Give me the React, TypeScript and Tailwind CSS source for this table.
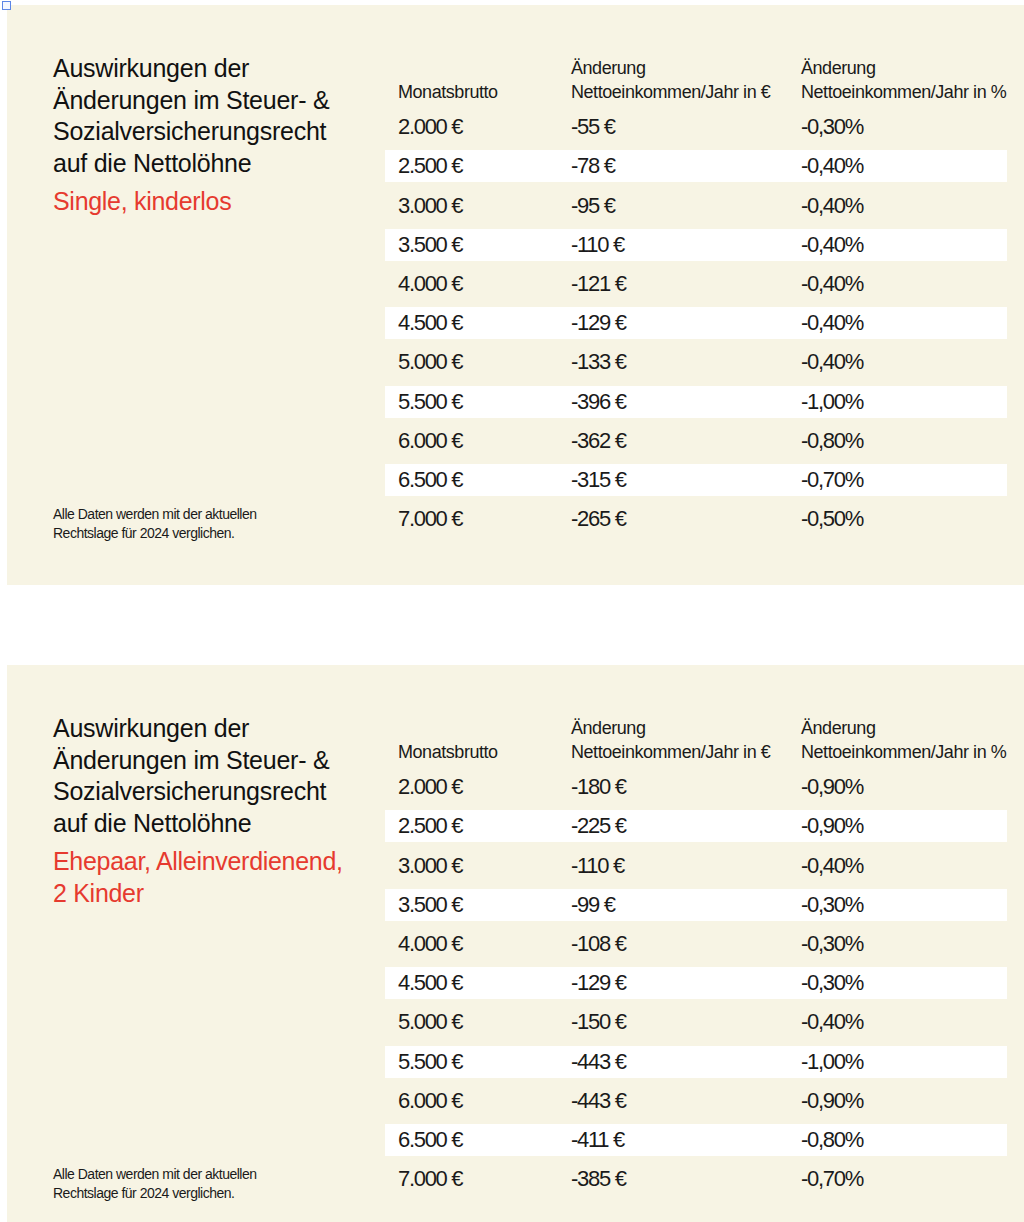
import React from "react";

type Row = [string, string, string];

const single: Row[] = [
  ["2.000 €", "-55 €", "-0,30%"],
  ["2.500 €", "-78 €", "-0,40%"],
  ["3.000 €", "-95 €", "-0,40%"],
  ["3.500 €", "-110 €", "-0,40%"],
  ["4.000 €", "-121 €", "-0,40%"],
  ["4.500 €", "-129 €", "-0,40%"],
  ["5.000 €", "-133 €", "-0,40%"],
  ["5.500 €", "-396 €", "-1,00%"],
  ["6.000 €", "-362 €", "-0,80%"],
  ["6.500 €", "-315 €", "-0,70%"],
  ["7.000 €", "-265 €", "-0,50%"],
];

const family: Row[] = [
  ["2.000 €", "-180 €", "-0,90%"],
  ["2.500 €", "-225 €", "-0,90%"],
  ["3.000 €", "-110 €", "-0,40%"],
  ["3.500 €", "-99 €", "-0,30%"],
  ["4.000 €", "-108 €", "-0,30%"],
  ["4.500 €", "-129 €", "-0,30%"],
  ["5.000 €", "-150 €", "-0,40%"],
  ["5.500 €", "-443 €", "-1,00%"],
  ["6.000 €", "-443 €", "-0,90%"],
  ["6.500 €", "-411 €", "-0,80%"],
  ["7.000 €", "-385 €", "-0,70%"],
];

const sans = "font-['Liberation_Sans',Arial,sans-serif]";

function Panel({ subtitle, rows }: { subtitle: React.ReactNode; rows: Row[] }) {
  return (
    <section className={`${sans} flex bg-[#f7f4e4] pl-[46px] pr-[17px] pt-[48px] pb-[42px] text-[#1a1a1a]`}>
      {/* left: headline + footnote */}
      <div className="flex w-[332px] shrink-0 flex-col">
        <h2 className="text-[25px] leading-[31.7px] tracking-[-0.25px] text-[#111]">
          Auswirkungen der
          <br />
          Änderungen im Steuer- &amp;
          <br />
          Sozialversicherungsrecht
          <br />
          auf die Nettolöhne
        </h2>
        <p className="mt-[6px] text-[25px] leading-[31.7px] tracking-[-0.3px] text-[#e63a2f]">
          {subtitle}
        </p>
        <p className="mt-auto text-[14px] leading-[19px] tracking-[-0.5px]">
          Alle Daten werden mit der aktuellen
          <br />
          Rechtslage für 2024 verglichen.
        </p>
      </div>

      {/* right: table */}
      <div className="mt-[3px] flex w-[622px] flex-col gap-[7.2px] pb-[8px]">
        <div className="flex items-end text-[18px] leading-[24px] tracking-[-0.45px]">
          <div className="w-[173px] pl-[13px]">Monatsbrutto</div>
          <div className="w-[230px] pl-[13px]">
            Änderung
            <br />
            Nettoeinkommen/Jahr in €
          </div>
          <div className="w-[219px] pl-[13px]">
            Änderung
            <br />
            Nettoeinkommen/Jahr in %
          </div>
        </div>
        {rows.map((r, i) => (
          <div
            key={r[0]}
            className={`flex h-[32px] items-center text-[22px] leading-[32px] tracking-[-1.3px] ${
              i % 2 === 1 ? "bg-white" : ""
            }`}
          >
            <div className="w-[173px] pl-[13px]">{r[0]}</div>
            <div className="w-[230px] pl-[13px]">{r[1]}</div>
            <div className="w-[219px] pl-[13px]">{r[2]}</div>
          </div>
        ))}
      </div>
    </section>
  );
}

export default function App() {
  return (
    <div className="relative min-h-[1222px] bg-white pl-[7px] pt-[5px]">
      <div className="absolute left-[2px] top-[1px] h-[9px] w-[9px] border border-[#5c86e6] bg-[#f4f7ff]" />
      <div className="flex flex-col gap-[80px]">
        <Panel subtitle="Single, kinderlos" rows={single} />
        <Panel
          subtitle={
            <>
              Ehepaar, Alleinverdienend,
              <br />2 Kinder
            </>
          }
          rows={family}
        />
      </div>
    </div>
  );
}
